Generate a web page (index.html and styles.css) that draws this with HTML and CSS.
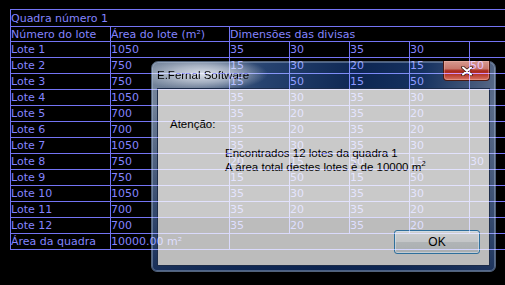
FILE: index.html
```html
<!DOCTYPE html>
<html lang="pt">
<head>
<meta charset="utf-8">
<title>Quadra</title>
<link rel="stylesheet" href="styles.css">
</head>
<body>
<div class="sheet">
  <table class="grid">
    <colgroup>
      <col class="c-lote"><col class="c-area"><col class="c-dim"><col class="c-dim"><col class="c-dim"><col class="c-dim"><col class="c-dim">
    </colgroup>
    <tr class="r-title"><td colspan="7">Quadra número 1</td></tr>
    <tr class="r-head"><td>Número do lote</td><td>Área do lote (m²)</td><td colspan="5">Dimensões das divisas</td></tr>
    <tr><td>Lote 1</td><td>1050</td><td>35</td><td>30</td><td>35</td><td>30</td><td></td></tr>
    <tr><td>Lote 2</td><td>750</td><td>15</td><td>30</td><td>20</td><td>15</td><td>50</td></tr>
    <tr><td>Lote 3</td><td>750</td><td>15</td><td>50</td><td>15</td><td>50</td><td></td></tr>
    <tr><td>Lote 4</td><td>1050</td><td>35</td><td>30</td><td>35</td><td>30</td><td></td></tr>
    <tr><td>Lote 5</td><td>700</td><td>35</td><td>20</td><td>35</td><td>20</td><td></td></tr>
    <tr><td>Lote 6</td><td>700</td><td>35</td><td>20</td><td>35</td><td>20</td><td></td></tr>
    <tr><td>Lote 7</td><td>1050</td><td>35</td><td>30</td><td>35</td><td>30</td><td></td></tr>
    <tr><td>Lote 8</td><td>750</td><td>20</td><td>15</td><td>50</td><td>15</td><td>30</td></tr>
    <tr><td>Lote 9</td><td>750</td><td>15</td><td>50</td><td>15</td><td>50</td><td></td></tr>
    <tr><td>Lote 10</td><td>1050</td><td>35</td><td>30</td><td>35</td><td>30</td><td></td></tr>
    <tr><td>Lote 11</td><td>700</td><td>35</td><td>20</td><td>35</td><td>20</td><td></td></tr>
    <tr><td>Lote 12</td><td>700</td><td>35</td><td>20</td><td>35</td><td>20</td><td></td></tr>
    <tr><td>Área da quadra</td><td>10000.00 m²</td><td colspan="5"></td></tr>
  </table>
</div>

<div class="dialog">
  <div class="titlebar">
    <span class="title">E.Fernal Software</span>
    <button class="close" aria-label="Fechar">
      <svg width="12" height="10" viewBox="0 0 12 10">
        <path d="M2 1.5 L10 8.5 M10 1.5 L2 8.5" stroke="#3a1510" stroke-width="3.6" stroke-linecap="round"/>
        <path d="M2 1.5 L10 8.5 M10 1.5 L2 8.5" stroke="#ffffff" stroke-width="2" stroke-linecap="round"/>
      </svg>
    </button>
  </div>
  <div class="content">
    <div class="message">
      <div class="label">Atenção:</div>
      <div class="text">
        <div>Encontrados 12 lotes da quadra 1</div>
        <div>A área total destes lotes é de 10000 m<sup>2</sup></div>
      </div>
    </div>
    <div class="buttons">
      <button class="ok">OK</button>
    </div>
  </div>
</div>
</body>
</html>
```

FILE: styles.css
```css
html, body {
  margin: 0;
  padding: 0;
  background: #000;
  overflow: hidden;
}

.sheet {
  padding: 9px 0 0 10px;
  overflow: hidden;
}

.grid {
  border-collapse: separate;
  border-spacing: 0;
  table-layout: fixed;
  width: 520px;
  border-top: 1px solid #7474f4;
  border-left: 1px solid #7474f4;
  font-family: "DejaVu Sans", Verdana, sans-serif;
  font-size: 11px;
  color: #8484ff;
}

.c-lote { width: 100px; }
.c-area { width: 119px; }
.c-dim { width: 60px; }

.grid td {
  box-sizing: border-box;
  height: 16px;
  padding: 0;
  border-right: 1px solid #7474f4;
  border-bottom: 1px solid #7474f4;
  line-height: 13px;
  white-space: nowrap;
  overflow: hidden;
  vertical-align: middle;
}

.grid .r-title td { height: 17px; }
.grid .r-head td { height: 15px; }

/* dialog */
.dialog {
  position: absolute;
  left: 151px;
  top: 61px;
  width: 345px;
  height: 211px;
  box-sizing: border-box;
  border: 1px solid #52627a;
  border-radius: 7px 7px 6px 6px;
  padding: 0 5px 5px;
  display: flex;
  flex-direction: column;
  mix-blend-mode: screen;
  font-family: "Liberation Sans", Arial, sans-serif;
  font-size: 11.5px;
  color: #000;
  background:
    radial-gradient(ellipse 64px 17px at 52px 12px, rgba(228,232,240,0.95) 0%, rgba(228,232,240,0.55) 50%, rgba(228,232,240,0) 100%),
    linear-gradient(to bottom, rgba(12,36,80,0) 0%, rgba(12,36,80,0) 20%, rgba(12,36,80,0.85) 100%),
    linear-gradient(100deg, #76869c 0%, #5c6e8a 12%, #274370 30%, #0d2652 55%, #163260 72%, #4a5d7e 88%, #7d8ca2 100%);
  box-shadow: inset 0 0 0 1px rgba(190,205,228,0.35);
}

.titlebar {
  height: 26px;
  display: flex;
  align-items: flex-start;
  flex: none;
}

.title {
  margin-top: 6px;
  line-height: 14px;
  color: #000;
}

.close {
  margin: -1px 0 0 auto;
  width: 47px;
  height: 20px;
  padding: 0;
  border: 1px solid #4a1a14;
  border-top: none;
  border-radius: 0 0 4px 4px;
  background: linear-gradient(to bottom, #d69a90 0%, #c8786c 40%, #a8281c 52%, #b63a2c 72%, #d87466 100%);
  box-shadow: inset 0 0 0 1px rgba(255,200,190,0.35);
  display: flex;
  align-items: center;
  justify-content: center;
}

.content {
  flex: 1;
  display: flex;
  flex-direction: column;
  border: 1px solid #1d2d4a;
  background: #c9c9c9;
}

.message {
  flex: 1;
  padding: 28px 0 0 12px;
  line-height: 14px;
}

.text {
  margin: 15px 0 0 55px;
}

.text sup {
  font-size: 8px;
  line-height: 0;
  vertical-align: 5px;
}

.buttons {
  flex: none;
  height: 48px;
  box-sizing: border-box;
  background: #bcbcbc;
  display: flex;
  justify-content: flex-end;
  align-items: flex-start;
  padding: 13px 9px 0 0;
}

.ok {
  width: 86px;
  height: 24px;
  box-sizing: border-box;
  border: 1px solid #2f6f9c;
  border-radius: 3px;
  background: linear-gradient(to bottom, #cdcfd0 0%, #c4c6c8 48%, #b0b4b6 52%, #a9adb0 100%);
  box-shadow: inset 0 0 0 1px rgba(215,230,240,0.55);
  font-family: "Liberation Sans", Arial, sans-serif;
  font-size: 12px;
  color: #000;
  padding: 0;
  line-height: 20px;
}
```
